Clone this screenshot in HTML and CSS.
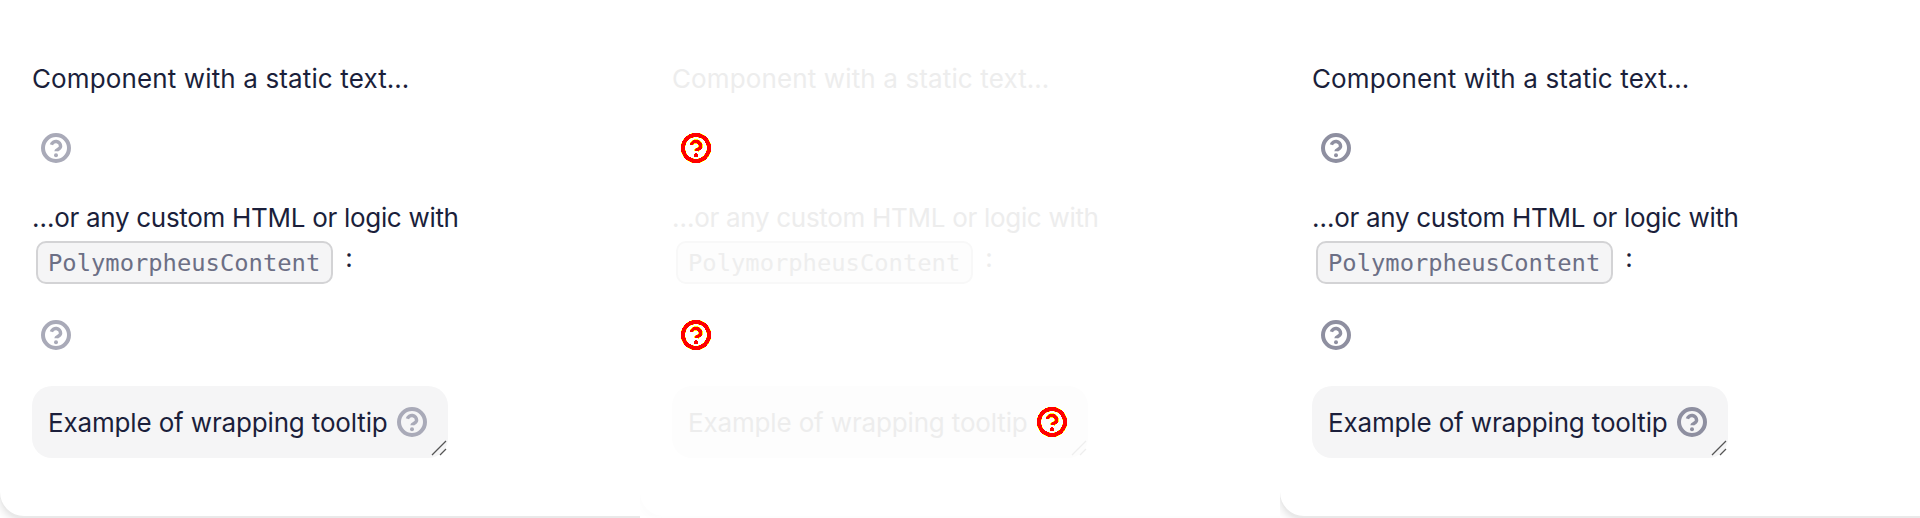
FILE: index.html
```html
<!DOCTYPE html>
<html lang="en">
<head>
    <meta charset="UTF-8">
    <title>Tooltip</title>
    <link rel="stylesheet" href="styles.css">
</head>
<body>
    <svg class="defs" width="0" height="0">
        <symbol id="help" viewBox="0 0 30 30">
            <circle class="halo" cx="15" cy="15" r="13"/>
            <path class="halo" d="M10.4 11.8a4.7 4.7 0 0 1 9.2 1.4c0 3-4.6 3.2-4.6 5"/>
            <circle cx="15" cy="15" r="13" fill="none" stroke="currentColor" stroke-width="4"/>
            <path d="M10.4 11.8a4.7 4.7 0 0 1 9.2 1.4c0 3-4.6 3.2-4.6 5" fill="none" stroke="currentColor" stroke-width="3.4"/>
            <circle cx="15" cy="22.2" r="2" fill="currentColor"/>
        </symbol>
    </svg>

    <div class="examples">
        <section class="card card-light">
            <div class="card-body">
                <p class="line line-static">Component with a static text…</p>
                <div class="hint-row"><svg class="hint"><use href="#help"/></svg></div>
                <p class="line">…or any custom HTML or logic with <code class="code">PolymorpheusContent</code> :</p>
                <div class="hint-row"><svg class="hint"><use href="#help"/></svg></div>
                <div class="wrap-box">
                    <span class="wrap-text">Example of wrapping tooltip</span>
                    <svg class="hint"><use href="#help"/></svg>
                    <svg class="resizer" viewBox="0 0 16 16"><path d="M1 15L15 1M9 15l6-6"/></svg>
                </div>
            </div>
        </section>

        <section class="card card-faded">
            <div class="card-body">
                <p class="line line-static">Component with a static text…</p>
                <div class="hint-row"><svg class="hint"><use href="#help"/></svg></div>
                <p class="line">…or any custom HTML or logic with <code class="code">PolymorpheusContent</code> :</p>
                <div class="hint-row"><svg class="hint"><use href="#help"/></svg></div>
                <div class="wrap-box">
                    <span class="wrap-text">Example of wrapping tooltip</span>
                    <svg class="hint"><use href="#help"/></svg>
                    <svg class="resizer" viewBox="0 0 16 16"><path d="M1 15L15 1M9 15l6-6"/></svg>
                </div>
            </div>
        </section>

        <section class="card card-dark">
            <div class="card-body">
                <p class="line line-static">Component with a static text…</p>
                <div class="hint-row"><svg class="hint"><use href="#help"/></svg></div>
                <p class="line">…or any custom HTML or logic with <code class="code">PolymorpheusContent</code> :</p>
                <div class="hint-row"><svg class="hint"><use href="#help"/></svg></div>
                <div class="wrap-box">
                    <span class="wrap-text">Example of wrapping tooltip</span>
                    <svg class="hint"><use href="#help"/></svg>
                    <svg class="resizer" viewBox="0 0 16 16"><path d="M1 15L15 1M9 15l6-6"/></svg>
                </div>
            </div>
        </section>
    </div>
</body>
</html>
```
FILE: styles.css
```css
html, body {
    margin: 0;
    height: 518px;
    overflow: hidden;
    background-color: #fff;
}
body {
    font-family: Inter, "Noto Sans", sans-serif;
    font-size: 26px;
    color: #1b1f3b;
}
.defs {
    display: block;
    height: 0;
}
.examples {
    display: grid;
    grid-template-columns: repeat(3, 640px);
}
.card {
    height: 518px;
    overflow: hidden;
}
.card-body {
    height: 516px;
    box-sizing: border-box;
    padding: 61px 32px 0;
    background-color: #fff;
    border-radius: 0 0 0 24px;
    box-shadow: 0 2px 0 #e9e9e9, 0 4px 10px rgba(0, 0, 0, 0.14);
}
.line {
    margin: 0;
    line-height: 36px;
    letter-spacing: -0.3px;
}
.line-static {
    letter-spacing: 0.13px;
}
.hint-row {
    display: flex;
    padding: 36px 9px;
}
.line-static + .hint-row {
    padding-bottom: 37px;
}
.hint {
    display: block;
    width: 30px;
    height: 30px;
    flex: none;
    color: #a9aab8;
}
.halo {
    fill: none;
    stroke: var(--halo, none);
    stroke-width: 4.5;
}
.code {
    display: inline-block;
    margin: 5px 5px 0 4px;
    padding: 0 11px 0 10px;
    height: 43px;
    line-height: 41px;
    box-sizing: border-box;
    font-family: "DejaVu Sans Mono", monospace;
    font-size: 23.8px;
    letter-spacing: 0;
    color: #6c6f85;
    background-color: #f5f5f6;
    border: 2px solid #d3d3d5;
    border-radius: 10px;
    vertical-align: middle;
}
.wrap-box {
    position: relative;
    display: flex;
    align-items: center;
    gap: 9px;
    width: 416px;
    height: 72px;
    box-sizing: border-box;
    padding: 0 16px;
    background-color: #f5f5f6;
    border-radius: 20px;
}
.wrap-text {
    letter-spacing: -0.15px;
}
.resizer {
    position: absolute;
    right: 1px;
    bottom: 2px;
    width: 16px;
    height: 16px;
    fill: none;
    stroke: #555;
    stroke-width: 1.3;
}
.card-dark .hint {
    color: #8e8fa0;
}
.card-faded {
    color: #ededed;
}
.card-faded .card-body {
    box-shadow: 0 2px 0 #fdfdfd, 0 4px 10px rgba(0, 0, 0, 0.02);
}
.card-faded .wrap-box {
    background-color: #fdfdfd;
}
.card-faded .code {
    color: #eee;
    background-color: #fdfdfd;
    border-color: #f8f8f8;
}
.card-faded .resizer {
    stroke: #eee;
}
.card-faded .hint {
    --halo: #ff0;
    color: #f00;
    shape-rendering: crispEdges;
}
```
